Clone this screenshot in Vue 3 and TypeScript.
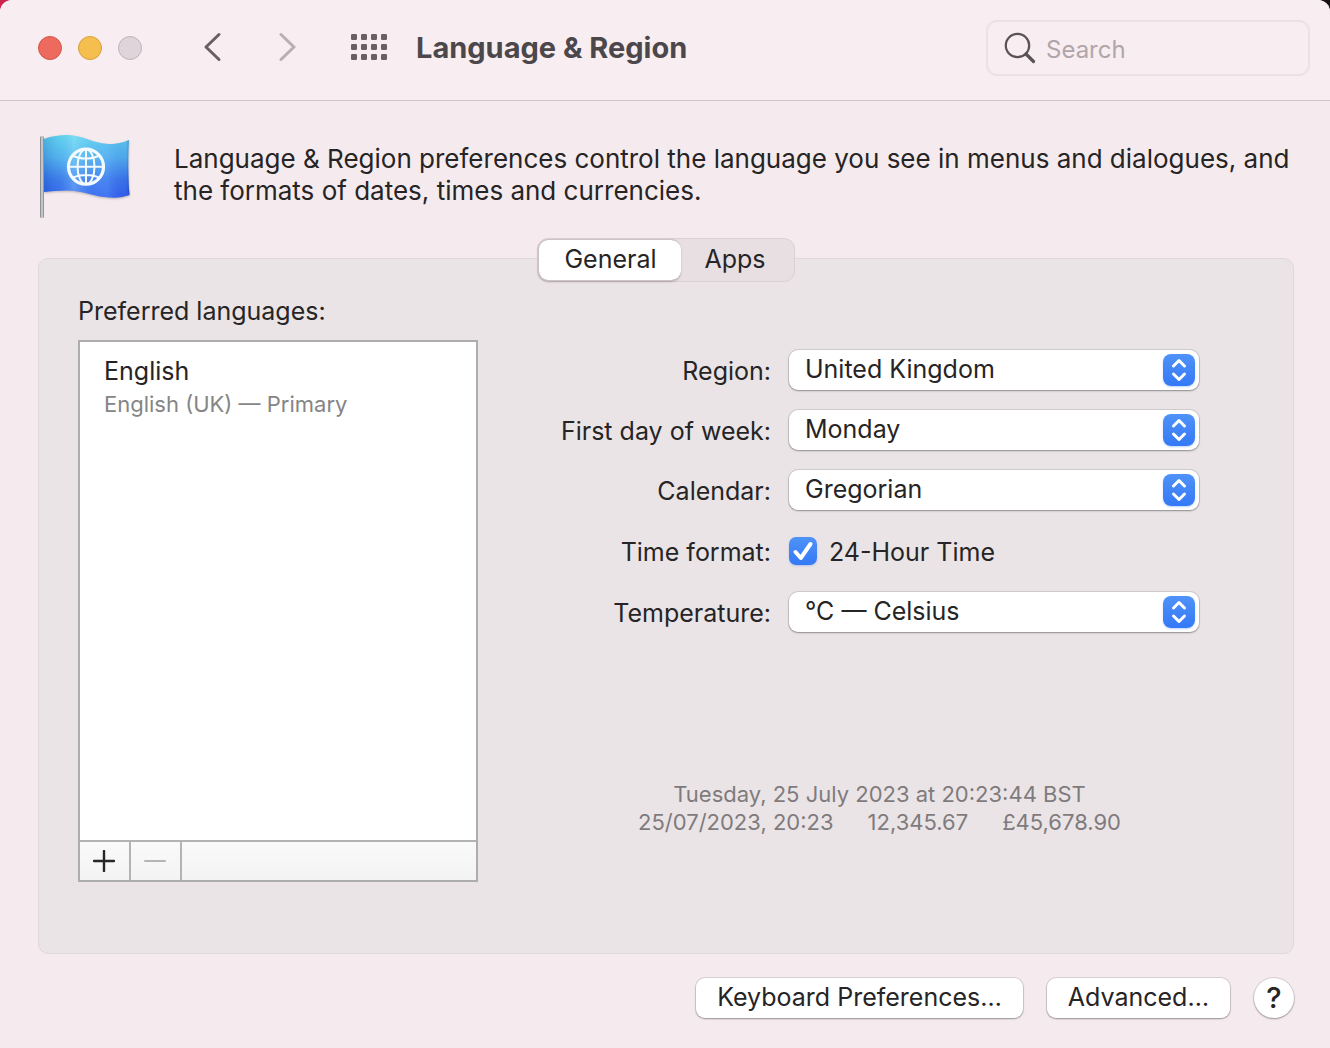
<script setup lang="ts">
import { ref } from 'vue'

interface Choice {
  id: string
  label: string
  options: string[]
}

const choices: Choice[] = [
  { id: 'region', label: 'Region:', options: ['United Kingdom'] },
  { id: 'first-day', label: 'First day of week:', options: ['Monday'] },
  { id: 'calendar', label: 'Calendar:', options: ['Gregorian'] },
]
const temperature: Choice = { id: 'temperature', label: 'Temperature:', options: ['°C — Celsius'] }

const tabs = ['General', 'Apps']
const activeTab = ref('General')
const hour24 = ref(true)
const query = ref('')
const gridX = [0, 10, 20, 30]
const gridY = [0, 10, 20]
</script>

<template>
  <div class="window">
    <header class="titlebar">
      <div class="lights">
        <button class="light close" type="button" aria-label="Close"></button>
        <button class="light minimise" type="button" aria-label="Minimise"></button>
        <button class="light zoom" type="button" aria-label="Zoom" disabled></button>
      </div>
      <nav class="history">
        <button class="plain" type="button" aria-label="Back">
          <svg width="20" height="32" viewBox="0 0 20 32"><path d="M16 2.500L3 15L16 27.500" fill="none" stroke="#6b5f64" stroke-width="3" stroke-linecap="round" stroke-linejoin="round" /></svg>
        </button>
        <button class="plain" type="button" aria-label="Forward" disabled>
          <svg width="20" height="32" viewBox="0 0 20 32"><path d="M2 2.500L15 15L2 27.500" fill="none" stroke="#b9aeb2" stroke-width="3" stroke-linecap="round" stroke-linejoin="round" /></svg>
        </button>
      </nav>
      <button class="plain" type="button" aria-label="Show All">
        <svg width="36" height="28" viewBox="0 0 36 28" fill="#6b5f64">
          <template v-for="y in gridY" :key="y">
            <rect v-for="x in gridX" :key="x" :x="x" :y="y" width="6" height="6" rx="1.200" />
          </template>
        </svg>
      </button>
      <h1>Language &amp; Region</h1>
      <label class="search">
        <svg width="34" height="34" viewBox="0 0 34 34" fill="none" stroke="#5a5256" stroke-linecap="round">
          <circle cx="13.500" cy="14.500" r="11.700" stroke-width="2.200" />
          <path d="M22 23L29.500 30.500" stroke-width="3.200" />
        </svg>
        <input v-model="query" type="search" placeholder="Search" aria-label="Search" />
      </label>
    </header>

    <main>
      <section class="intro">
        <svg class="flag" width="96" height="88" viewBox="0 0 96 88">
          <defs>
            <linearGradient id="cloth" x1="0" y1="0" x2="0" y2="1">
              <stop offset="0" stop-color="#62d4ec" />
              <stop offset="0.350" stop-color="#52b2ee" />
              <stop offset="0.700" stop-color="#3a74ea" />
              <stop offset="1" stop-color="#3059ee" />
            </linearGradient>
            <linearGradient id="folds" x1="0" y1="0" x2="1" y2="0">
              <stop offset="0" stop-color="#0a4aa0" stop-opacity="0.220" />
              <stop offset="0.180" stop-color="#5ab8f0" stop-opacity="0.150" />
              <stop offset="0.350" stop-color="#a8f0ff" stop-opacity="0.350" />
              <stop offset="0.550" stop-color="#7cc8ff" stop-opacity="0.200" />
              <stop offset="0.740" stop-color="#6fb4ff" stop-opacity="0.300" />
              <stop offset="0.960" stop-color="#2a56c8" stop-opacity="0.100" />
              <stop offset="1" stop-color="#0a2a80" stop-opacity="0.400" />
            </linearGradient>
            <linearGradient id="pole" x1="0" y1="0" x2="1" y2="0">
              <stop offset="0" stop-color="#77777c" />
              <stop offset="0.500" stop-color="#dedee2" />
              <stop offset="1" stop-color="#7b7b82" />
            </linearGradient>
          </defs>
          <g class="cloth">
            <path d="M6 7C14 4 22 3 29 3C45 3 56 12 71 12C80 12 86 10 91 8C90 20 90 45 91.500 63C86 65 79 66 72 65.500C56 65 45 58.500 29 58.500C20 58.500 12 59.500 6 60Z" fill="url(#cloth)" />
            <path d="M6 7C14 4 22 3 29 3C45 3 56 12 71 12C80 12 86 10 91 8C90 20 90 45 91.500 63C86 65 79 66 72 65.500C56 65 45 58.500 29 58.500C20 58.500 12 59.500 6 60Z" fill="url(#folds)" />
          </g>
          <rect x="2" y="4" width="4" height="82" rx="1.500" fill="url(#pole)" />
          <g fill="none" stroke="#f4fbff" stroke-width="2">
            <circle cx="48" cy="34.700" r="17.500" stroke-width="3.200" />
            <ellipse cx="48" cy="34.700" rx="8.500" ry="17.500" />
            <path d="M48 17V52M30 34.700H66M34.500 23.500C42 27.500 54 27.500 61.500 23.500M34.500 46C42 42 54 42 61.500 46" />
          </g>
        </svg>
        <p>Language &amp; Region preferences control the language you see in menus and dialogues, and the formats of dates, times and currencies.</p>
      </section>

      <div class="tabs" role="tablist">
        <button
          v-for="tab in tabs"
          :key="tab"
          type="button"
          role="tab"
          class="tab"
          :class="{ active: tab === activeTab }"
          :aria-selected="tab === activeTab"
          @click="activeTab = tab"
        >{{ tab }}</button>
      </div>

      <section class="panel">
        <div class="languages">
          <h2>Preferred languages:</h2>
          <div class="list">
            <ul>
              <li>
                <span class="name">English</span>
                <span class="detail">English (UK) — Primary</span>
              </li>
            </ul>
            <div class="list-actions">
              <button type="button" aria-label="Add language">
                <svg width="22" height="22" viewBox="0 0 22 22"><path d="M11 1V21M1 11H21" stroke="#262626" stroke-width="2.400" stroke-linecap="round" /></svg>
              </button>
              <button type="button" aria-label="Remove language" disabled>
                <svg width="22" height="22" viewBox="0 0 22 22"><path d="M1 11H21" stroke="#b5b5b5" stroke-width="2" stroke-linecap="round" /></svg>
              </button>
            </div>
          </div>
        </div>

        <div class="formats">
          <form @submit.prevent>
            <template v-for="c in choices" :key="c.id">
              <label :for="c.id">{{ c.label }}</label>
              <div class="popup">
                <select :id="c.id"><option v-for="o in c.options" :key="o">{{ o }}</option></select>
                <svg width="32" height="32" viewBox="0 0 32 32"><path d="M10.500 12L16 6.500L21.500 12M10.500 20L16 25.500L21.500 20" /></svg>
              </div>
            </template>
            <span class="caption">Time format:</span>
            <label class="check">
              <span class="box">
                <input v-model="hour24" type="checkbox" />
                <svg v-if="hour24" width="28" height="28" viewBox="0 0 28 28"><path d="M6.500 15L11.800 21L21.500 7" /></svg>
              </span>
              <span class="check-text">24-Hour Time</span>
            </label>
            <label :for="temperature.id">{{ temperature.label }}</label>
            <div class="popup">
              <select :id="temperature.id"><option v-for="o in temperature.options" :key="o">{{ o }}</option></select>
              <svg width="32" height="32" viewBox="0 0 32 32"><path d="M10.500 12L16 6.500L21.500 12M10.500 20L16 25.500L21.500 20" /></svg>
            </div>
          </form>
          <div class="sample">
            <span>Tuesday, 25 July 2023 at 20:23:44 BST</span>
            <div class="sample-row">
              <span>25/07/2023, 20:23</span>
              <span>12,345.67</span>
              <span>£45,678.90</span>
            </div>
          </div>
        </div>
      </section>

      <footer>
        <button class="push" type="button">Keyboard Preferences…</button>
        <button class="push" type="button">Advanced…</button>
        <button class="push help" type="button" aria-label="Help">?</button>
      </footer>
    </main>
  </div>
</template>

<style>
body {
  margin: 0;
  background: linear-gradient(90deg, #cc2450 50%, #161214 50%);
}
</style>

<style scoped>
* {
  box-sizing: border-box;
}
.window {
  min-height: 100vh;
  border-radius: 12px 12px 0 0;
  overflow: hidden;
  background: #f5ebee;
  color: #262425;
  font-family: Inter, "Liberation Sans", sans-serif;
  font-size: 25px;
  line-height: 32px;
}
button,
input,
select {
  font: inherit;
  color: inherit;
  margin: 0;
  padding: 0;
  border: 0;
}
svg {
  display: block;
  flex: none;
}
.titlebar {
  display: flex;
  align-items: center;
  height: 101px;
  padding: 0 20px 4px 38px;
  background: #f8edf1;
  border-bottom: 1px solid #d0c4c9;
}
.lights {
  display: flex;
  gap: 16px;
}
.light {
  width: 24px;
  height: 24px;
  border-radius: 50%;
  border: 1px solid;
}
.close {
  background: #ec6a5e;
  border-color: #d5544a;
}
.minimise {
  background: #f4bf4f;
  border-color: #d8a13c;
}
.zoom {
  background: #dfd4d9;
  border-color: #c0b4b9;
}
.history {
  display: flex;
  gap: 56px;
  margin: 0 52px 0 61px;
}
.plain {
  background: none;
}
h1 {
  flex: 1;
  margin: 0 0 0 29px;
  font-size: 29px;
  font-weight: 700;
  color: #4b474a;
}
.search {
  display: flex;
  align-items: center;
  gap: 8px;
  width: 324px;
  height: 56px;
  padding: 0 16px;
  border: 2px solid #ece1e5;
  border-radius: 11px;
}
.search input {
  flex: 1;
  min-width: 0;
  padding-top: 3px;
  background: none;
  outline: 0;
  font-size: 24px;
}
.search input::placeholder {
  color: #b0a6aa;
  opacity: 1;
}
main {
  padding: 31px 36px 30px 38px;
}
.intro {
  display: flex;
  align-items: center;
  gap: 40px;
}
.intro p {
  margin: 0;
  padding-bottom: 2px;
  font-size: 26px;
}
.cloth {
  filter: drop-shadow(0 1px 1px #00000040);
}
.tabs {
  position: relative;
  display: flex;
  width: fit-content;
  height: 44px;
  margin: 18px auto -24px;
  border: 1px solid #dbd1d5;
  border-radius: 11px;
  background: #e8dfe3;
}
.tab {
  padding: 0 28px 2px 24px;
  border-radius: 10px;
  background: none;
}
.tab.active {
  padding: 0 24px 2px 25px;
  border: 1px solid #cdc3c7;
  border-width: 1px 0 1px 1px;
  background: #fff;
  background-clip: padding-box;
  box-shadow: 0 1px 2px #00000038;
}
.panel {
  display: flex;
  padding: 36px 12px 71px 39px;
  border: 1px solid #e0d9dc;
  border-radius: 10px;
  background: #eae4e6;
}
.languages {
  width: 400px;
}
h2 {
  margin: 0 0 13px;
  font: inherit;
}
.list {
  border: 2px solid #adadad;
  background: #fff;
}
ul {
  height: 498px;
  margin: 0;
  padding: 13px 24px;
  list-style: none;
}
.name,
.detail {
  display: block;
}
.detail {
  margin-top: 1px;
  font-size: 22px;
  color: #858585;
}
.list-actions {
  display: flex;
  height: 40px;
  border-top: 2px solid #b3b3b3;
  background: linear-gradient(#fafafa, #f3f3f3);
}
.list-actions button {
  display: grid;
  place-items: center;
  width: 51px;
  padding-right: 2px;
  border-right: 2px solid #b3b3b3;
  background: none;
}
.formats {
  flex: 1;
  padding-top: 55px;
}
form {
  display: grid;
  grid-template-columns: 1fr 410px;
  grid-template-rows: 40px 40px 40px 42px 40px;
  align-items: center;
  gap: 20px 18px;
  padding-right: 82px;
}
form > label:not(.check),
.caption {
  padding-top: 2px;
  text-align: right;
}
.popup {
  display: grid;
  align-items: center;
}
.popup select,
.popup svg {
  grid-area: 1 / 1;
}
.popup select,
.push {
  height: 40px;
  border-radius: 9px;
  background: #fff;
  box-shadow: 0 0 0 1px #0000001a, 0 1px 2px #00000050;
}
.popup select {
  appearance: none;
  width: 100%;
  padding: 0 44px 2px 16px;
}
.popup svg {
  justify-self: end;
  margin-right: 4px;
  border-radius: 8px;
  background: linear-gradient(#4f92f8, #3479f6);
  box-shadow: 0 1px 2px #3479f650;
  pointer-events: none;
}
.popup path,
.box path {
  fill: none;
  stroke: #fff;
  stroke-width: 3;
  stroke-linecap: round;
  stroke-linejoin: round;
}
.box path {
  stroke-width: 4;
}
.check {
  display: flex;
  align-items: center;
  gap: 12px;
}
.check-text {
  padding-top: 2px;
}
.box {
  display: grid;
}
.box input,
.box svg {
  grid-area: 1 / 1;
}
.box input {
  appearance: none;
  width: 28px;
  height: 28px;
  border-radius: 7px;
  background: #fff;
}
.box input:checked {
  background: linear-gradient(#4f92f8, #3479f6);
  box-shadow: 0 1px 2px #3479f650;
}
.box svg {
  pointer-events: none;
}
.sample {
  display: flex;
  flex-direction: column;
  align-items: center;
  margin-top: 148px;
  font-size: 22px;
  line-height: 28px;
  color: #7f7b7d;
}
.sample-row {
  display: flex;
  gap: 34px;
}
footer {
  display: flex;
  justify-content: flex-end;
  gap: 24px;
  margin-top: 24px;
}
.push {
  padding: 0 21px 2px;
}
.help {
  width: 40px;
  padding: 0;
  border-radius: 50%;
  font-size: 29px;
  font-weight: 500;
}
</style>
